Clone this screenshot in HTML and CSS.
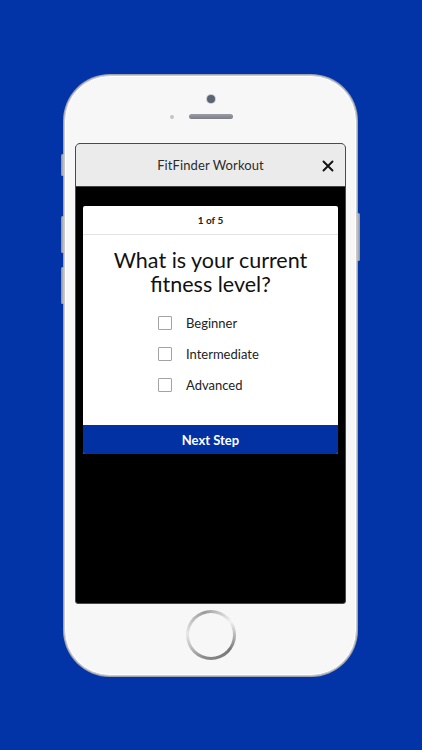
FILE: index.html
```html
<!DOCTYPE html>
<html>
<head>
<meta charset="utf-8">
<link rel="stylesheet" href="styles.css">
</head>
<body>
<div class="phone">
  <span class="side side-mute"></span>
  <span class="side side-vol1"></span>
  <span class="side side-vol2"></span>
  <span class="side side-power"></span>
  <div class="top">
    <div class="camera"></div>
    <div class="speaker-row">
      <span class="sensor"></span>
      <span class="speaker"></span>
    </div>
  </div>
  <div class="screen">
    <div class="header">
      <span class="title">FitFinder Workout</span>
      <svg class="close" width="12" height="12" viewBox="0 0 12 12"><path d="M1.5 1.5 L10.5 10.5 M10.5 1.5 L1.5 10.5" stroke="#111" stroke-width="1.9" stroke-linecap="round"/></svg>
    </div>
    <div class="stage">
      <div class="card">
        <div class="card-head">1 of 5</div>
        <div class="card-body">
          <h1 class="question">What is your current<br>fitness level?</h1>
          <ul class="options">
            <li class="option"><span class="box"></span><span class="label">Beginner</span></li>
            <li class="option"><span class="box"></span><span class="label">Intermediate</span></li>
            <li class="option"><span class="box"></span><span class="label">Advanced</span></li>
          </ul>
        </div>
        <div class="next">Next Step</div>
      </div>
    </div>
  </div>
  <div class="bottom">
    <div class="home"><div class="home-inner"></div></div>
  </div>
</div>
</body>
</html>
```
FILE: styles.css
```css
* { box-sizing: border-box; }
html, body { margin: 0; padding: 0; }
body {
  width: 422px;
  height: 750px;
  background: #0233a7;
  font-family: Lato, "Open Sans", sans-serif;
  padding: 75px 0 0 64px;
  overflow: hidden;
}
.phone {
  position: relative;
  width: 293px;
  height: 601px;
  background: #f7f7f7;
  border-radius: 46px;
  border: 1.5px solid #c9c9cc;
  box-shadow: inset 0 0 0 1px #ffffff, 0 0 0 1px #9ea3b0;
  display: flex;
  flex-direction: column;
  align-items: center;
}
.side {
  position: absolute;
  width: 3px;
  background: linear-gradient(90deg, #8e919a, #c4c6cc);
  border-radius: 1.5px;
}
.side-mute { left: -4px; top: 78px; height: 22px; }
.side-vol1 { left: -4px; top: 140px; height: 37px; }
.side-vol2 { left: -4px; top: 191px; height: 37px; }
.side-power { right: -4px; top: 137px; height: 48px; background: linear-gradient(90deg, #c4c6cc, #8e919a); }
.top {
  height: 67px;
  width: 100%;
  display: flex;
  flex-direction: column;
  align-items: center;
  padding-top: 19px;
}
.camera {
  width: 8px;
  height: 8px;
  border-radius: 50%;
  background: #5b6473;
  box-shadow: 0 0 0 1px #c8cbd2;
}
.speaker-row {
  margin-top: 11px;
  display: flex;
  align-items: center;
  margin-left: -19px;
}
.sensor {
  width: 4px;
  height: 4px;
  border-radius: 50%;
  background: #c4c4c4;
}
.speaker {
  margin-left: 15px;
  width: 44px;
  height: 5px;
  border-radius: 3px;
  background: linear-gradient(#9a9da3, #7b7e84);
}
.screen {
  width: 271px;
  height: 461px;
  background: #000;
  border: 1px solid #4a4a4a;
  border-radius: 5px 5px 3px 3px;
  overflow: hidden;
  display: flex;
  flex-direction: column;
}
.header {
  position: relative;
  height: 43px;
  background: #ebebeb;
  border-bottom: 1px solid #444;
  display: flex;
  align-items: center;
  justify-content: center;
}
.title {
  font-size: 13px;
  color: #2b2b2b;
  letter-spacing: 0.1px;
}
.close {
  position: absolute;
  right: 11px;
  top: 16px;
}
.stage {
  flex: 1;
  padding: 19px 7px 0 7px;
}
.card {
  background: #fff;
  border-radius: 2px;
  overflow: hidden;
}
.card-head {
  height: 29px;
  border-bottom: 1px solid #e3e3e3;
  display: flex;
  align-items: center;
  justify-content: center;
  font-size: 10px;
  color: #222;
  font-weight: 700;
}
.card-body {
  padding: 14px 0 25px 0;
}
.question {
  margin: 0;
  font-size: 21.5px;
  font-weight: 400;
  line-height: 23.5px;
  text-align: center;
  color: #111;
}
.options {
  list-style: none;
  margin: 11px 0 0 0;
  padding: 0 0 0 75px;
}
.option {
  height: 31px;
  display: flex;
  align-items: center;
}
.box {
  width: 14px;
  height: 14px;
  border: 1.5px solid #a3a3a3;
  border-radius: 1px;
  background: #fff;
}
.label {
  margin-left: 14px;
  font-size: 13px;
  color: #222;
}
.next {
  height: 29px;
  background: #0131a3;
  color: #fff;
  font-size: 13px;
  font-weight: 700;
  display: flex;
  align-items: center;
  justify-content: center;
}
.bottom {
  flex: 1;
  width: 100%;
  display: flex;
  justify-content: center;
  padding-top: 6px;
}
.home {
  width: 50px;
  height: 50px;
  border-radius: 50%;
  background: conic-gradient(from 200deg, #8c8c8c, #e8e8e8, #9a9a9a, #f2f2f2, #777, #8c8c8c);
  padding: 3px;
}
.home-inner {
  width: 100%;
  height: 100%;
  border-radius: 50%;
  background: #f7f7f7;
}
```
